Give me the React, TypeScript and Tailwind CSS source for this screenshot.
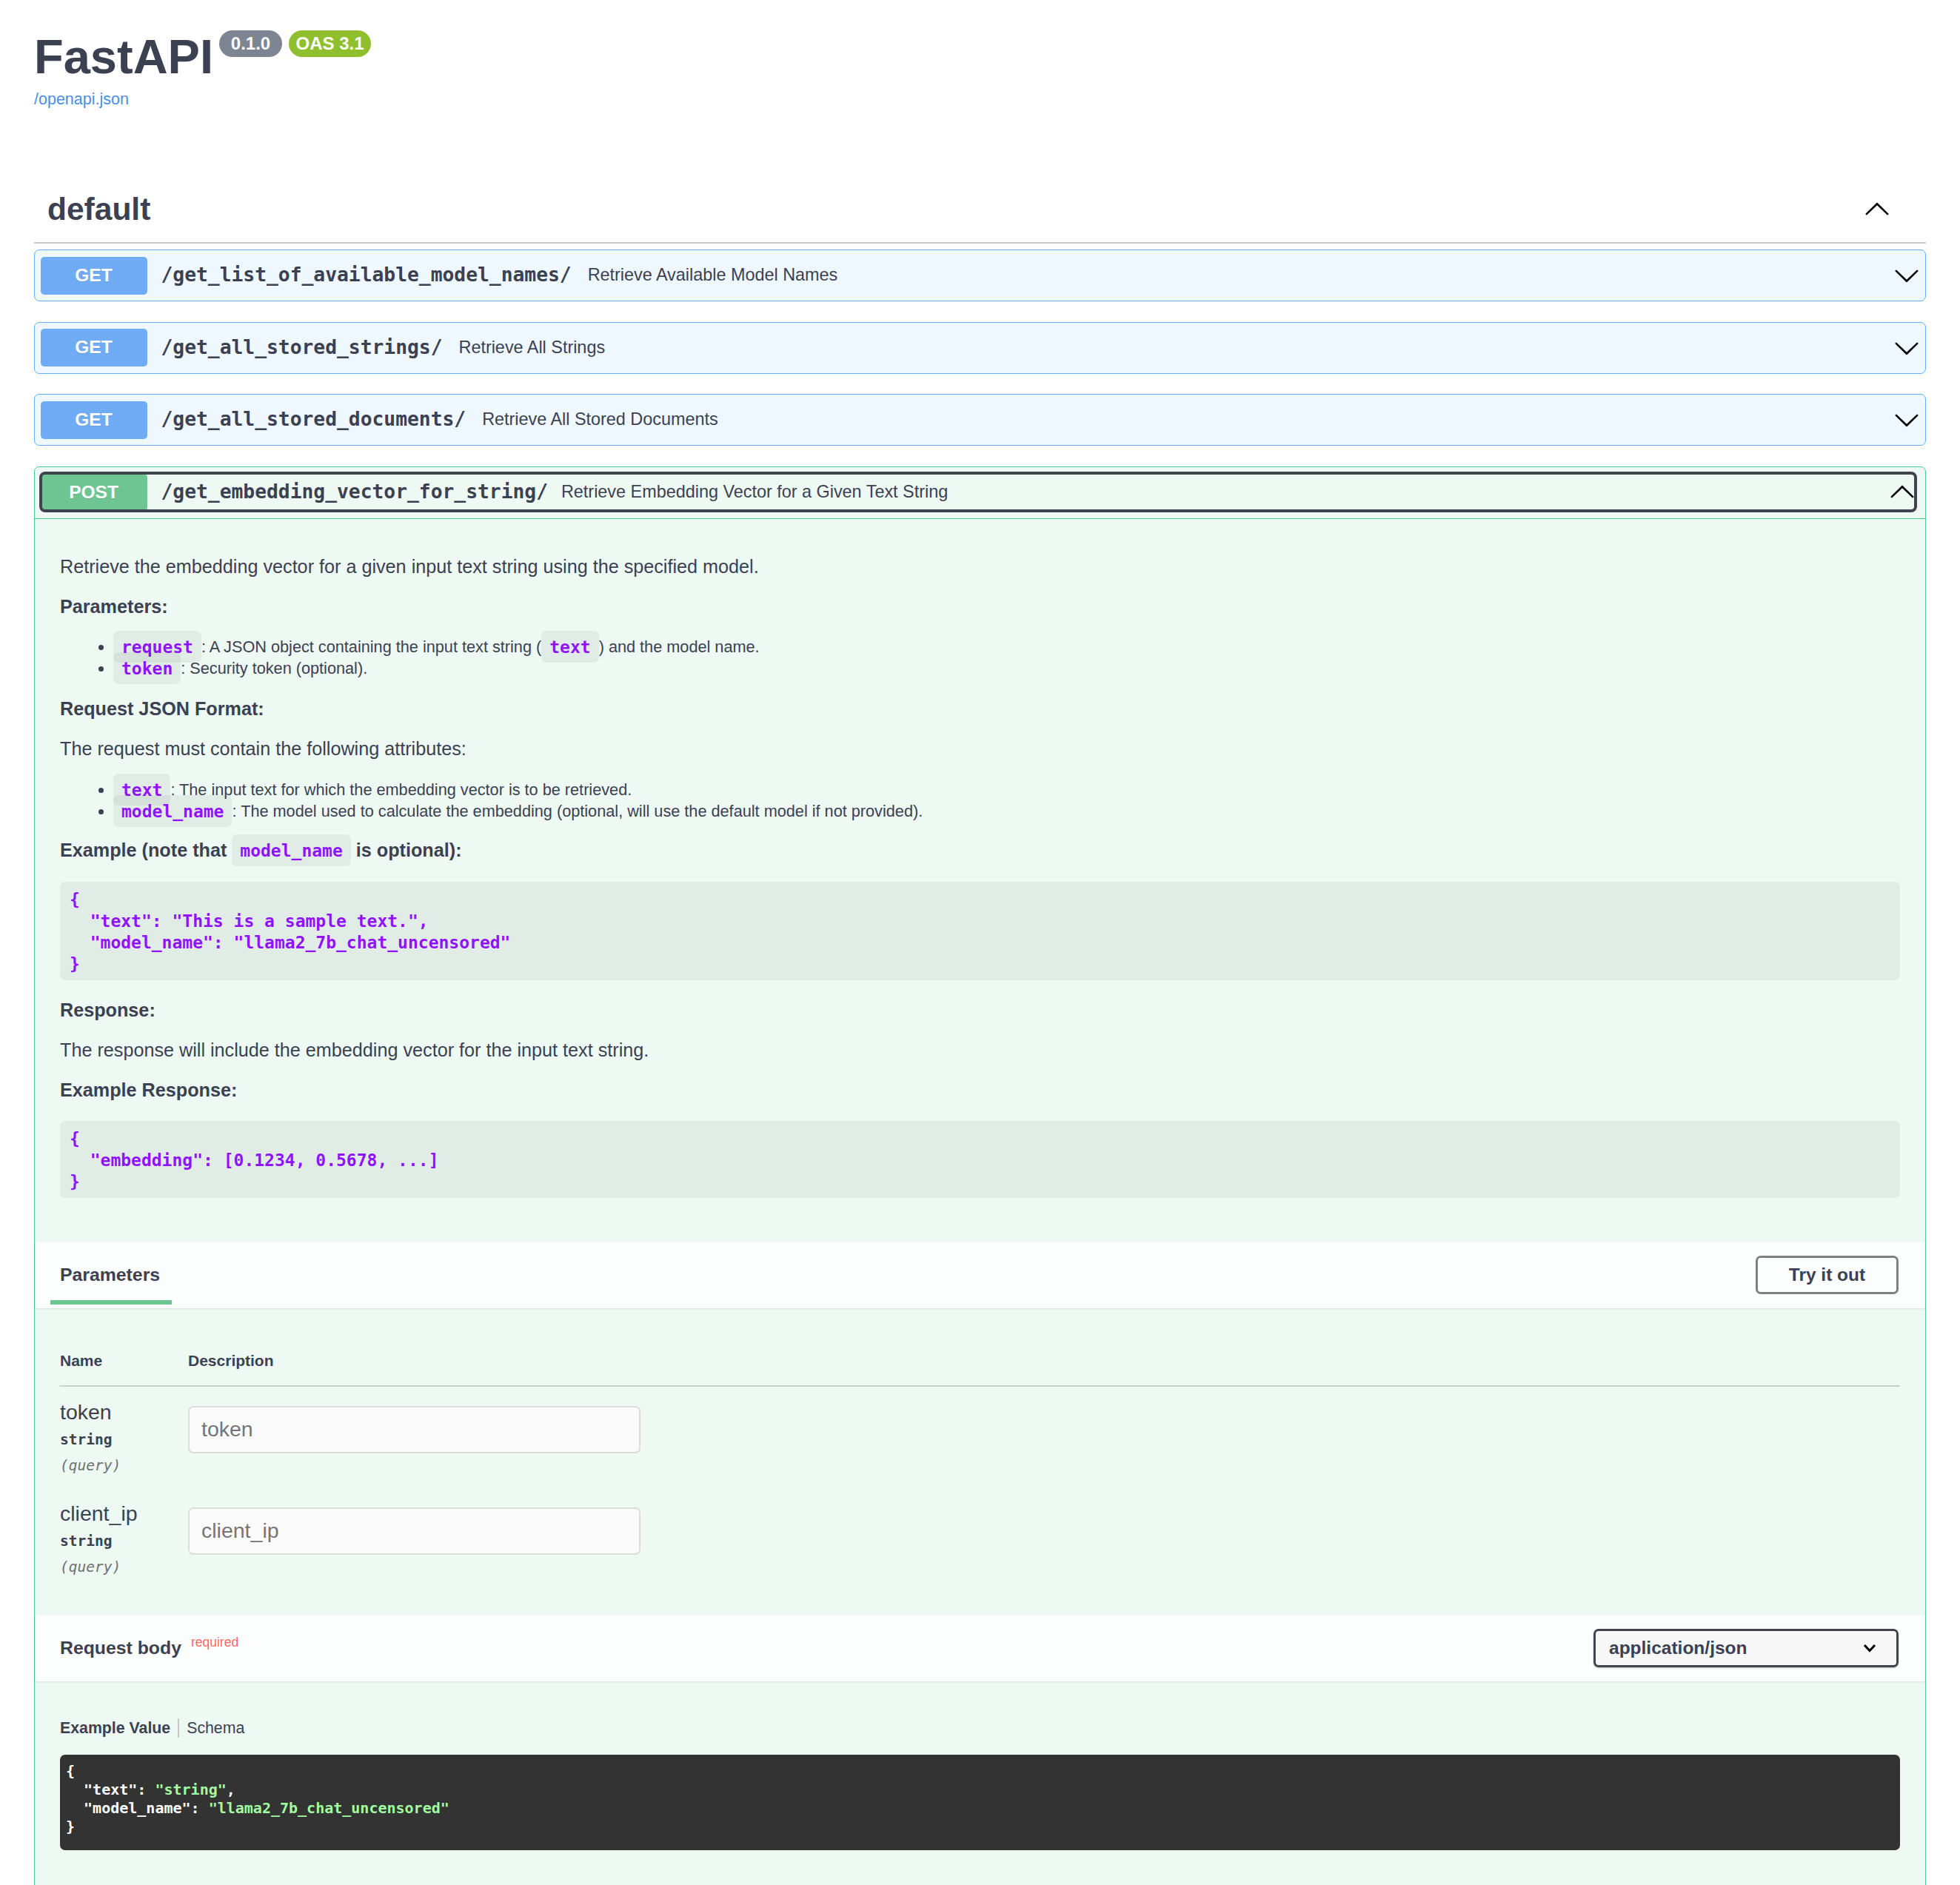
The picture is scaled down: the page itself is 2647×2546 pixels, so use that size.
import React from "react";

const SANS = "font-['Liberation_Sans',Arial,sans-serif]";
const MONO = "font-['DejaVu_Sans_Mono',monospace]";

const getRows = [
    { path: "/get_list_of_available_model_names/", summary: "Retrieve Available Model Names" },
    { path: "/get_all_stored_strings/", summary: "Retrieve All Strings" },
    { path: "/get_all_stored_documents/", summary: "Retrieve All Stored Documents" },
];

function Arrow({ up, className }: { up?: boolean; className?: string }) {
    return (
        <svg viewBox="0 0 20 20" className={className}>
            <path
                fill="currentColor"
                transform={up ? "rotate(180 10 10)" : undefined}
                d="M17.418 6.109c.272-.268.709-.268.979 0s.271.701 0 .969l-7.908 7.83c-.27.268-.707.268-.979 0l-7.908-7.83c-.27-.268-.27-.701 0-.969.271-.268.709-.268.979 0L10 13.25l7.418-7.141z"
            />
        </svg>
    );
}

function Code({ children }: { children: React.ReactNode }) {
    return (
        <code className="rounded-[7px] bg-[rgba(0,0,0,0.05)] px-[11px] py-[8.5px] font-['DejaVu_Sans_Mono',monospace] text-[23px] font-bold text-[#9012fe]">
            {children}
        </code>
    );
}

function ParamRow({ name }: { name: string }) {
    return (
        <div className="flex pb-[16px] pt-[17px]">
            <div className="w-[173px] shrink-0">
                <div className="text-[28.5px] leading-[34px]">{name}</div>
                <div className={`mt-[7px] ${MONO} text-[19.5px] font-bold leading-[28px]`}>string</div>
                <div className={`mt-[7px] ${MONO} text-[19.5px] italic leading-[28px] text-[#707070]`}>(query)</div>
            </div>
            <div>
                <input
                    readOnly
                    placeholder={name}
                    className="mt-[9px] h-[64px] w-[611px] rounded-[7px] border-2 border-[#dcdcdc] bg-[#fafafa] px-[16px] text-[28.5px] outline-none placeholder:text-[#757575]"
                />
            </div>
        </div>
    );
}

export default function App() {
    return (
        <div className={`min-h-screen bg-white text-[#3b4151] ${SANS}`}>
            <div className="px-[46px] pb-[10px]">
                {/* info */}
                <div className="pt-[44px]">
                    <div className="flex items-start">
                        <h1 className="text-[65px] font-bold leading-none">FastAPI</h1>
                        <span className="ml-[8px] mt-[-3px] flex h-[36px] w-[85px] items-center justify-center rounded-full bg-[#7d8492] text-[24px] font-bold text-white">
                            0.1.0
                        </span>
                        <span className="ml-[9px] mt-[-3px] flex h-[36px] w-[111px] items-center justify-center rounded-full bg-[#8fbf2c] text-[24px] font-bold text-white">
                            OAS 3.1
                        </span>
                    </div>
                    <a className="mt-[13px] block text-[21.5px] leading-[24px] text-[#4990e2]">/openapi.json</a>
                </div>

                {/* tag header */}
                <div className="mt-[93px] flex h-[90px] items-center justify-between border-b-2 border-[#c8c9cd] pl-[18px] pr-[48px]">
                    <h3 className="text-[42.5px] font-bold leading-none">default</h3>
                    <Arrow up className="h-[36px] w-[36px] text-black" />
                </div>

                <div className="mt-[8px] flex flex-col gap-[27.5px]">
                    {getRows.map((row) => (
                        <div
                            key={row.path}
                            className="flex h-[70px] items-center rounded-[7px] border-[1.5px] border-[#61affe] bg-[#eff7ff] px-[7.5px]"
                        >
                            <span className="flex h-[51px] w-[144px] shrink-0 items-center justify-center rounded-[5px] bg-[#70abf6] text-[24.5px] font-bold text-white [text-shadow:0_1px_0_rgba(0,0,0,0.1)]">
                                GET
                            </span>
                            <span className={`ml-[19px] ${MONO} text-[26.3px] font-bold`}>{row.path}</span>
                            <span className="ml-[22px] text-[23.4px]">{row.summary}</span>
                            <Arrow className="ml-auto h-[36px] w-[36px] text-black" />
                        </div>
                    ))}

                    {/* POST, expanded */}
                    <div className="rounded-[7px] border-[1.5px] border-[#49cc90] bg-[#eef9f3]">
                        <div className="relative flex h-[70px] items-center border-b-[1.5px] border-[#49cc90] px-[7.5px]">
                            <span className="flex h-[50px] w-[144px] shrink-0 items-center justify-center rounded-[5px] bg-[#6ec592] text-[24.5px] font-bold text-white [text-shadow:0_1px_0_rgba(0,0,0,0.1)]">
                                POST
                            </span>
                            <span className={`ml-[19px] ${MONO} text-[26.3px] font-bold`}>/get_embedding_vector_for_string/</span>
                            <span className="ml-[18px] text-[23.4px]">Retrieve Embedding Vector for a Given Text String</span>
                            <Arrow up className="ml-auto mr-[6px] h-[36px] w-[36px] text-black" />
                            <div className="pointer-events-none absolute bottom-[8px] left-[6px] right-[11px] top-[6px] rounded-[8px] border-[4px] border-[#3f4350]" />
                        </div>

                        {/* description */}
                        <div className="px-[34px] pb-[60px] pt-[49px]">
                            <p className="text-[25.2px] leading-[30px]">
                                Retrieve the embedding vector for a given input text string using the specified model.
                            </p>
                            <p className="mt-[24px] text-[25.2px] font-bold leading-[30px]">Parameters:</p>
                            <ul className="mt-[25.5px] list-disc pl-[72px] text-[21.7px] leading-[29px]">
                                <li>
                                    <Code>request</Code>: A JSON object containing the input text string (<Code>text</Code>) and the model name.
                                </li>
                                <li>
                                    <Code>token</Code>: Security token (optional).
                                </li>
                            </ul>
                            <p className="mt-[24.5px] text-[25.2px] font-bold leading-[30px]">Request JSON Format:</p>
                            <p className="mt-[24px] text-[25.2px] leading-[30px]">The request must contain the following attributes:</p>
                            <ul className="mt-[26.5px] list-disc pl-[72px] text-[21.7px] leading-[29px]">
                                <li>
                                    <Code>text</Code>: The input text for which the embedding vector is to be retrieved.
                                </li>
                                <li>
                                    <Code>model_name</Code>: The model used to calculate the embedding (optional, will use the default model if not provided).
                                </li>
                            </ul>
                            <p className="mt-[22.5px] text-[25.2px] font-bold leading-[30px]">
                                Example (note that <Code>model_name</Code> is optional):
                            </p>
                            <pre
                                className={`mt-[27px] rounded-[7px] bg-[rgba(0,0,0,0.05)] pb-[7px] pl-[13px] pt-[10px] ${MONO} text-[23px] font-bold leading-[29px] text-[#9012fe]`}
                            >
{`{
  "text": "This is a sample text.",
  "model_name": "llama2_7b_chat_uncensored"
}`}
                            </pre>
                            <p className="mt-[25px] text-[25.2px] font-bold leading-[30px]">Response:</p>
                            <p className="mt-[24px] text-[25.2px] leading-[30px]">
                                The response will include the embedding vector for the input text string.
                            </p>
                            <p className="mt-[24px] text-[25.2px] font-bold leading-[30px]">Example Response:</p>
                            <pre
                                className={`mt-[27px] rounded-[7px] bg-[rgba(0,0,0,0.05)] pb-[7px] pl-[13px] pt-[10px] ${MONO} text-[23px] font-bold leading-[29px] text-[#9012fe]`}
                            >
{`{
  "embedding": [0.1234, 0.5678, ...]
}`}
                            </pre>
                        </div>

                        {/* parameters header */}
                        <div className="relative flex h-[89px] items-center justify-between bg-[rgba(255,255,255,0.8)] pl-[34px] pr-[36px] shadow-[0_1px_2px_rgba(0,0,0,0.1)]">
                            <h4 className="text-[24.8px] font-bold">Parameters</h4>
                            <span className="absolute bottom-[5px] left-[21px] h-[6px] w-[164px] bg-[#6cc794]" />
                            <button className="h-[52px] w-[193px] rounded-[7px] border-[3px] border-[#808080] text-[24.5px] font-bold text-[#3b4151]">
                                Try it out
                            </button>
                        </div>

                        {/* parameters table */}
                        <div className="px-[34px] pb-[35px] pt-[35px]">
                            <div className="flex border-b-2 border-[#c8d1cd] pb-[18px] pt-[21px] text-[21px] font-bold leading-[30px]">
                                <div className="w-[173px]">Name</div>
                                <div>Description</div>
                            </div>
                            <ParamRow name="token" />
                            <ParamRow name="client_ip" />
                        </div>

                        {/* request body header */}
                        <div className="flex h-[89px] items-center justify-between bg-[rgba(255,255,255,0.8)] pl-[34px] pr-[36px] shadow-[0_1px_2px_rgba(0,0,0,0.1)]">
                            <h4 className="text-[24.8px] font-bold">
                                Request body
                                <span className="relative top-[-10px] ml-[13px] text-[17.5px] font-normal text-[#ff6666]">required</span>
                            </h4>
                            <div className="flex h-[52px] w-[412px] items-center justify-between rounded-[7px] border-[3px] border-[#41444e] bg-[#f7f7f7] pl-[18px] pr-[27px] text-[24.5px] font-bold shadow-[0_1px_2px_rgba(0,0,0,0.25)]">
                                application/json
                                <svg viewBox="0 0 18 12" className="h-[12px] w-[18px]">
                                    <polyline points="2,2 9,9.5 16,2" fill="none" stroke="black" strokeWidth="3" />
                                </svg>
                            </div>
                        </div>

                        {/* example value */}
                        <div className="px-[34px] pb-[60px] pt-[48px]">
                            <div className="flex items-center text-[21.3px] leading-[30px]">
                                <span className="font-bold">Example Value</span>
                                <span className="mx-[10px] h-[26px] w-[2px] bg-[#c6c6c6]" />
                                <span>Schema</span>
                            </div>
                            <div
                                className={`mt-[21px] whitespace-pre rounded-[7px] bg-[#333333] pb-[19px] pl-[8px] pt-[10px] ${MONO} text-[20px] font-bold leading-[25px] text-white`}
                            >
                                <div>{"{"}</div>
                                <div>
                                    {'  "text": '}
                                    <span className="text-[#a2fca2]">"string"</span>,
                                </div>
                                <div>
                                    {'  "model_name": '}
                                    <span className="text-[#a2fca2]">"llama2_7b_chat_uncensored"</span>
                                </div>
                                <div>{"}"}</div>
                            </div>
                        </div>
                    </div>
                </div>
            </div>
        </div>
    );
}
